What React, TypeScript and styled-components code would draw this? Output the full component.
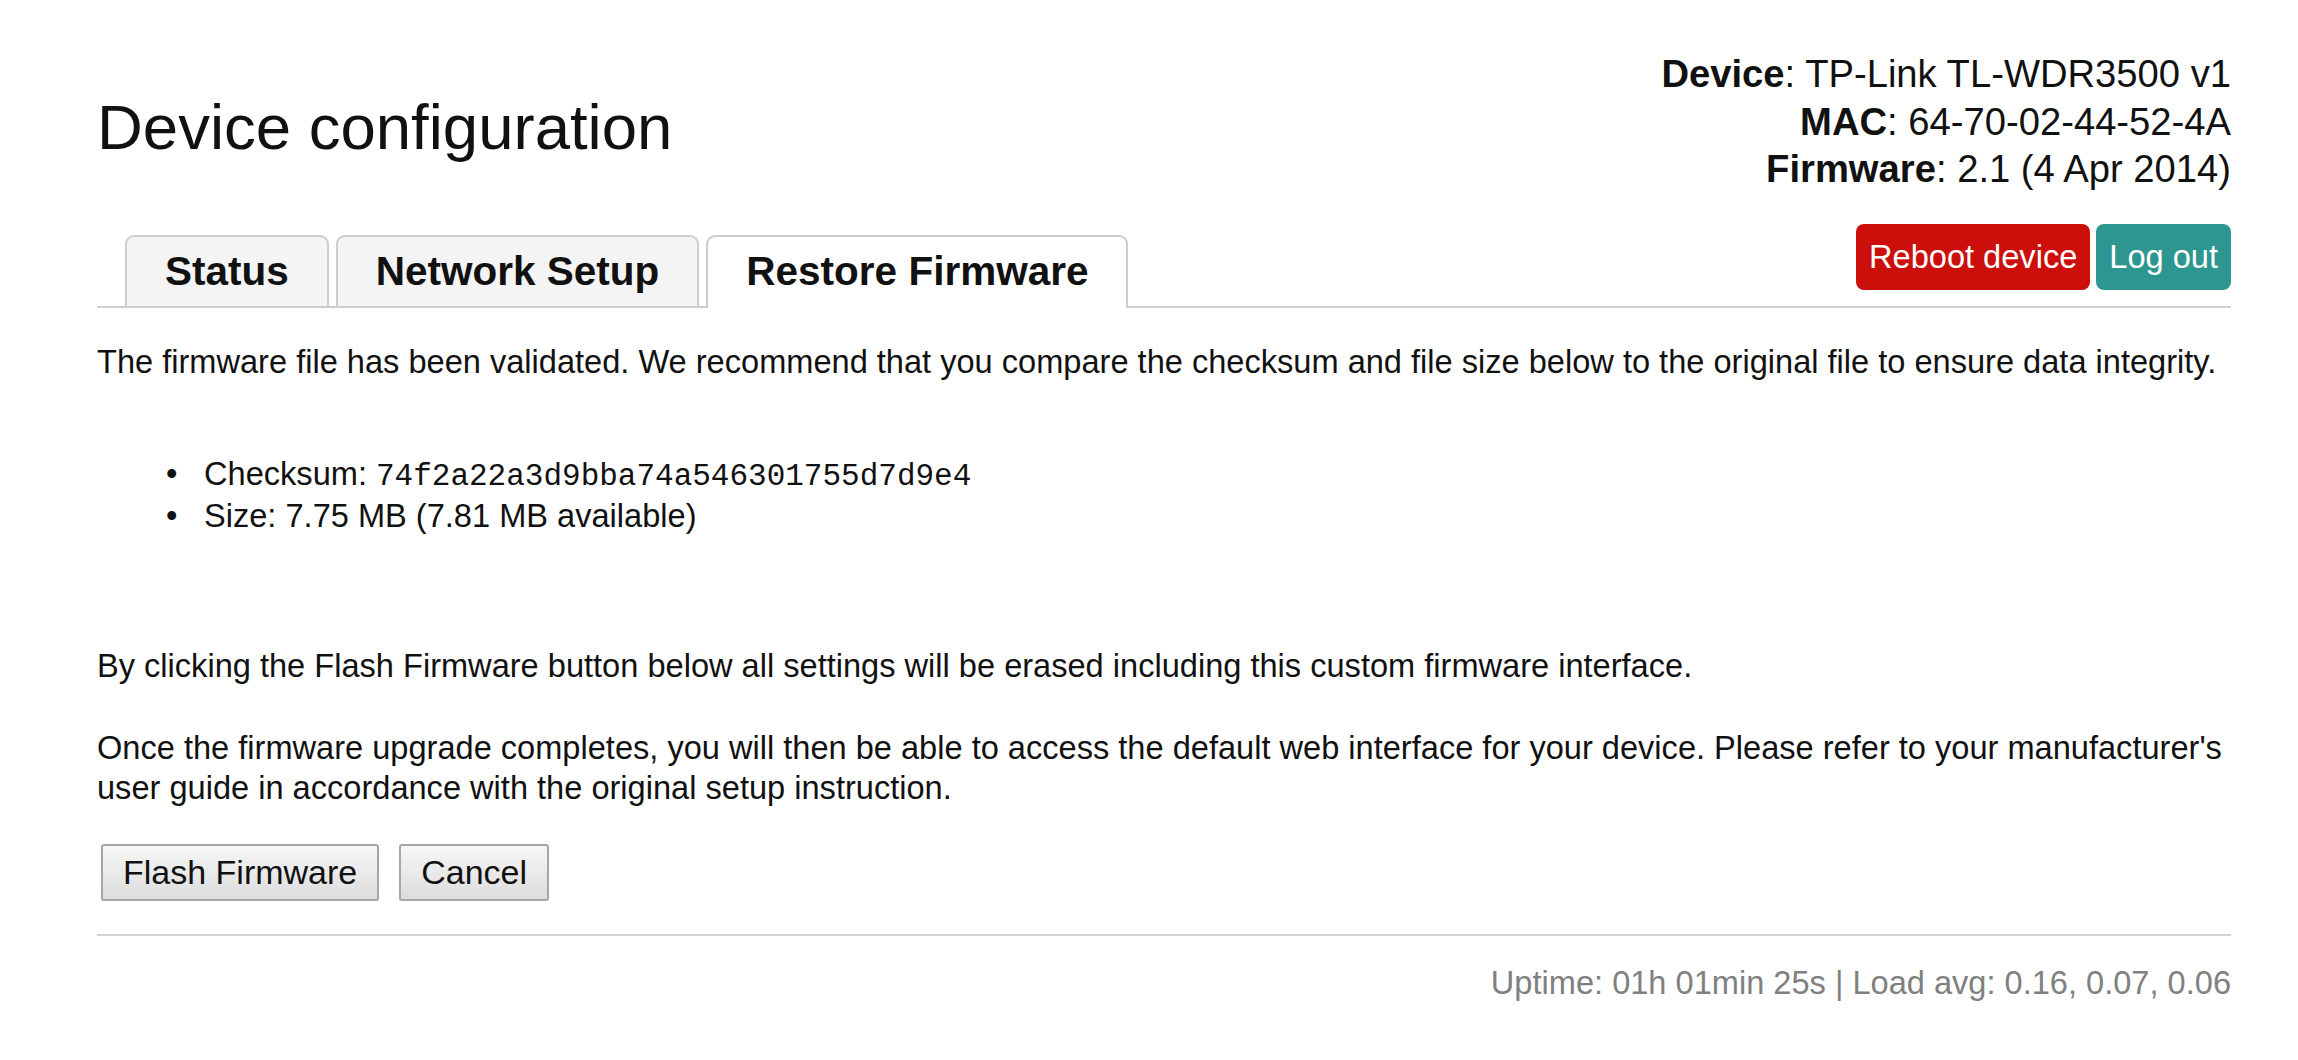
import React from "react";
import styled, {createGlobalStyle} from "styled-components";

const GlobalStyle = createGlobalStyle`
    body {
        margin: 0;
        background: #fff;
        color: #111;
        font-family: "Liberation Sans", Arial, sans-serif;
    }
`;

const StyledPage = styled.div`
    box-sizing: border-box;
    margin-left: 97px;
    padding-top: 50px;
    width: 2134px;
    font-size: 32.6px;
    line-height: 40px;
`;

const StyledHeader = styled.header`
    align-items: flex-start;
    display: flex;
    justify-content: space-between;
`;

const StyledTitle = styled.h1`
    font-size: 63.5px;
    font-weight: normal;
    line-height: 73px;
    margin: 40.5px 0 0;
`;

const StyledDeviceInfo = styled.div`
    font-size: 38.2px;
    line-height: 47.5px;
    text-align: right;
`;

const StyledTabBar = styled.nav`
    align-items: flex-end;
    border-bottom: 2px solid #cdcdcd;
    display: flex;
    margin-top: 31.5px;
    padding-left: 28px;
`;

const StyledTab = styled.div<{$active?: boolean}>`
    background: ${(p) => (p.$active ? "#fff" : "#f4f4f4")};
    border: 2px solid #cdcdcd;
    border-bottom: none;
    border-radius: 9px 9px 0 0;
    font-size: 40.5px;
    font-weight: bold;
    line-height: 46px;
    margin-bottom: ${(p) => (p.$active ? "-2px" : "0")};
    margin-right: 7px;
    padding: 11px 38px ${(p) => (p.$active ? "14px" : "12px")};
`;

const StyledActions = styled.div`
    display: flex;
    gap: 6px;
    margin-bottom: 16px;
    margin-left: auto;
`;

const StyledActionButton = styled.button<{$tone: "danger" | "info"}>`
    background: ${(p) => (p.$tone === "danger" ? "#cc0f0b" : "#2d9690")};
    border: none;
    border-radius: 8px;
    color: #fff;
    font-family: inherit;
    font-size: 32.6px;
    line-height: 38px;
    padding: 14px 13px;
`;

const StyledParagraph = styled.p<{$gap: number}>`
    margin: ${(p) => p.$gap}px 0 0;
`;

const StyledList = styled.ul`
    line-height: 39px;
    list-style: none;
    margin: 72px 0 0;
    padding-left: 107px;

    li::before {
        content: "•";
        display: inline-block;
        margin-left: -38px;
        width: 38px;
    }
`;

const StyledCode = styled.code`
    font-family: "Liberation Mono", "Courier New", monospace;
    font-size: 31px;
`;

const StyledFormActions = styled.div`
    display: flex;
    gap: 20px;
    margin-top: 36px;
    padding-left: 4px;
`;

const StyledFormButton = styled.button`
    background: linear-gradient(#f7f7f7, #dcdcdc);
    border: 2px solid #a6a6a6;
    border-radius: 3px;
    color: #111;
    font-family: inherit;
    font-size: 34px;
    height: 57px;
    line-height: 53px;
    padding: 0 20px;
`;

const StyledRule = styled.hr`
    border: none;
    border-top: 2px solid #d3d3d3;
    margin: 33px 0 0;
`;

const StyledFooter = styled.footer`
    color: #808080;
    margin-top: 27.7px;
    text-align: right;
`;

const infoRows = [
    {label: "Device", value: "TP-Link TL-WDR3500 v1"},
    {label: "MAC", value: "64-70-02-44-52-4A"},
    {label: "Firmware", value: "2.1 (4 Apr 2014)"},
];

const tabs = ["Status", "Network Setup", "Restore Firmware"];

export default function App() {
    return (
        <>
            <GlobalStyle />
            <StyledPage>
                <StyledHeader>
                    <StyledTitle>Device configuration</StyledTitle>
                    <StyledDeviceInfo>
                        {infoRows.map((row) => (
                            <div key={row.label}>
                                <b>{row.label}</b>: {row.value}
                            </div>
                        ))}
                    </StyledDeviceInfo>
                </StyledHeader>
                <StyledTabBar>
                    {tabs.map((tab) => (
                        <StyledTab key={tab} $active={tab === "Restore Firmware"}>
                            {tab}
                        </StyledTab>
                    ))}
                    <StyledActions>
                        <StyledActionButton $tone="danger">Reboot device</StyledActionButton>
                        <StyledActionButton $tone="info">Log out</StyledActionButton>
                    </StyledActions>
                </StyledTabBar>
                <StyledParagraph $gap={33.7}>
                    The firmware file has been validated. We recommend that you compare the checksum and
                    file size below to the original file to ensure data integrity.
                </StyledParagraph>
                <StyledList>
                    <li>
                        Checksum: <StyledCode>74f2a22a3d9bba74a546301755d7d9e4</StyledCode>
                    </li>
                    <li>Size: 7.75 MB (7.81 MB available)</li>
                </StyledList>
                <StyledParagraph $gap={111}>
                    By clicking the Flash Firmware button below all settings will be erased including this
                    custom firmware interface.
                </StyledParagraph>
                <StyledParagraph $gap={42}>
                    Once the firmware upgrade completes, you will then be able to access the default web
                    interface for your device. Please refer to your manufacturer's user guide in accordance
                    with the original setup instruction.
                </StyledParagraph>
                <StyledFormActions>
                    <StyledFormButton>Flash Firmware</StyledFormButton>
                    <StyledFormButton>Cancel</StyledFormButton>
                </StyledFormActions>
                <StyledRule />
                <StyledFooter>Uptime: 01h 01min 25s | Load avg: 0.16, 0.07, 0.06</StyledFooter>
            </StyledPage>
        </>
    );
}
